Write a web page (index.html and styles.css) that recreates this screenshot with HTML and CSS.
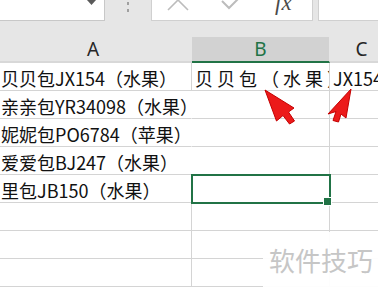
FILE: index.html
```html
<!DOCTYPE html>
<html lang="zh-CN">

<head>
    <meta charset="UTF-8">
    <title>表格</title>
    <link rel="stylesheet" href="styles.css">
</head>

<body>
    <div class="toolbar">
        <div class="namebox">
            <svg class="drop" width="9" height="6" viewBox="0 0 9 6"><polygon points="0,0 9,0 4.5,5" fill="#5a5a5a"/></svg>
        </div>
        <div class="grip"><i></i><i></i></div>
        <div class="fxbtns">
            <svg class="cancel" width="22" height="12" viewBox="0 0 22 12"><path d="M1 -10 L21 10 M21 -10 L1 10" stroke="#bcbcbc" stroke-width="1.6" fill="none"/></svg>
            <svg class="enter" width="22" height="12" viewBox="0 0 22 12"><polyline points="2,1 9,8 21,-4" stroke="#bcbcbc" stroke-width="2" fill="none"/></svg>
            <span class="fx">fx</span>
        </div>
        <div class="fxinput"></div>
    </div>
    <div class="band"></div>

    <div class="cols">
        <div class="colhead ca">A</div>
        <div class="colhead on">B</div>
        <div class="colhead cc">C</div>
    </div>

    <div class="sheet">
        <div class="row">
            <div class="cell a clip">贝贝包JX154（水果）</div>
            <div class="cell b clip wide">贝贝包（水果）</div>
            <div class="cell c">JX154</div>
        </div>
        <div class="row">
            <div class="cell a spill">亲亲包YR34098（水果）</div>
            <div class="cell b"></div>
            <div class="cell c"></div>
        </div>
        <div class="row">
            <div class="cell a spill">妮妮包PO6784（苹果）</div>
            <div class="cell b"></div>
            <div class="cell c"></div>
        </div>
        <div class="row">
            <div class="cell a spill">爱爱包BJ247（水果）</div>
            <div class="cell b"></div>
            <div class="cell c"></div>
        </div>
        <div class="row">
            <div class="cell a">里包JB150（水果）</div>
            <div class="cell b sel"></div>
            <div class="cell c"></div>
        </div>
        <div class="row">
            <div class="cell a"></div>
            <div class="cell b"></div>
            <div class="cell c"></div>
        </div>
        <div class="row">
            <div class="cell a"></div>
            <div class="cell b"></div>
            <div class="cell c"></div>
        </div>
        <div class="row">
            <div class="cell a"></div>
            <div class="cell b"></div>
            <div class="cell c"></div>
        </div>
    </div>

    <!-- 红色箭头标注 -->
    <svg class="arrows" width="378" height="288" viewBox="0 0 378 288">
        <polygon points="265,90 294,108 288.5,112 294.5,121 289.5,124 283,115.5 276.5,121" fill="#ec1a1a" stroke="#c40000" stroke-width="1" stroke-linejoin="round"/>
        <polygon points="351,89 346,118 341,114 338.5,122 333,120.5 336,111.5 328,114" fill="#ec1a1a" stroke="#c40000" stroke-width="1" stroke-linejoin="round"/>
    </svg>

    <div class="mark">软件技巧</div>
</body>

</html>
```

FILE: styles.css
```css
* {
    box-sizing: border-box;
}

body {
    margin: 0;
    width: 378px;
    height: 288px;
    overflow: hidden;
    position: relative;
    background: #fff;
    font-family: "Noto Sans CJK SC", sans-serif;
}

/* 编辑栏 */
.toolbar {
    display: flex;
    height: 21px;
    background: #e6e6e6;
}

.namebox {
    width: 105px;
    background: #fff;
    border-right: 1px solid #c8c8c8;
    border-bottom: 1px solid #c8c8c8;
    display: flex;
    justify-content: flex-end;
    align-items: flex-start;
}

.drop {
    margin-right: 8px;
}

.grip {
    width: 46px;
    display: flex;
    flex-direction: column;
    align-items: center;
    gap: 4px;
    padding: 2px 0 0 0;
}

.grip i {
    display: block;
    width: 2px;
    height: 3px;
    background: #a0a0a0;
}

.fxbtns {
    width: 162px;
    background: #fff;
    border: 1px solid #d0d0d0;
    border-top: 0;
    display: flex;
    align-items: flex-start;
}

.cancel {
    margin-left: 15px;
}

.enter {
    margin-left: 31px;
}

.fx {
    margin: -9px 0 0 33px;
    font: italic 23px/23px "Liberation Serif", serif;
    color: #4a4a4a;
}

.fxinput {
    flex: 1;
    margin-left: 5px;
    background: #fff;
    border-left: 1px solid #d0d0d0;
    border-bottom: 1px solid #d0d0d0;
}

.band {
    height: 16px;
    background: #e6e6e6;
}

/* 列标 */
.cols {
    display: grid;
    grid-template-columns: 192px 138px 1fr;
    height: 26px;
    background: #e6e6e6;
}

.colhead {
    font: 19px/24px "Noto Sans", sans-serif;
    color: #262626;
    text-align: center;
    border-bottom: 2px solid #d8d8d8;
}

.ca {
    padding-right: 6px;
}

.cc {
    padding-left: 15px;
}

.colhead.on {
    background: #d2d2d2;
    color: #217346;
    border-bottom-color: #217346;
    border-right: 1px solid #e6e6e6;
}

/* 单元格 */
.row {
    display: grid;
    grid-template-columns: 192px 138px 1fr;
    height: 28px;
}

.cell {
    height: 28px;
    padding: 3px 0 0 3px;
    font-size: 18px;
    line-height: 24px;
    color: #111;
    white-space: nowrap;
    border-right: 1px solid #d4d4d4;
    border-bottom: 1px solid #d4d4d4;
}

.cell.a {
    padding-left: 1px;
}

.cell.clip {
    overflow: hidden;
}

.cell.spill {
    border-right-color: transparent;
}

.cell.wide {
    letter-spacing: 4px;
}

.cell.c {
    border-right: 0;
    overflow: hidden;
}

.sel {
    position: relative;
    outline: 2px solid #217346;
    outline-offset: -1px;
}

.sel::after {
    content: "";
    position: absolute;
    right: -3px;
    bottom: -4px;
    width: 7px;
    height: 7px;
    background: #217346;
    border: 1px solid #fff;
}

.arrows {
    position: absolute;
    left: 0;
    top: 0;
    pointer-events: none;
}

/* 水印 */
.mark {
    position: absolute;
    left: 263px;
    top: 232px;
    width: 115px;
    height: 56px;
    padding-left: 6px;
    background: rgba(255, 255, 255, 0.95);
    color: #c6c6c6;
    font-size: 26px;
    line-height: 56px;
    white-space: nowrap;
}
```
